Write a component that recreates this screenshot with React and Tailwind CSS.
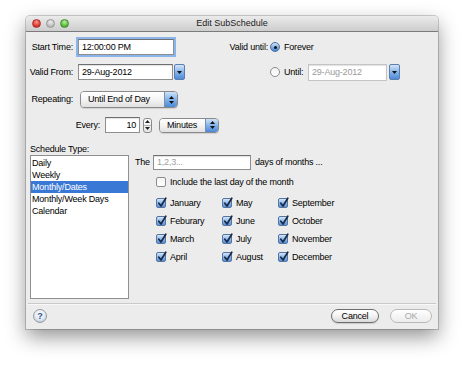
import React from "react";

function Field({ w, h = 16, children, focused, disabled, align = "left", placeholder }) {
  return (
    <div
      className={
        "flex items-center bg-white border " +
        (focused
          ? "shadow-[0_0_0_2px_#8ab4ea] "
          : "shadow-[inset_0_1px_1px_rgba(0,0,0,0.12)] ") +
        (disabled ? "border-[#c4c4c4] text-[#9a9a9a] " : "border-[#8f8f8f] border-t-[#6f6f6f] ") +
        (align === "right" ? "justify-end pr-[3px] " : "pl-[3px] ") +
        (placeholder ? "text-[#a0a0a0] " : "")
      }
      style={{ width: w, height: h }}
    >
      {children}
    </div>
  );
}

function DropBtn() {
  return (
    <div className="w-[11px] h-[16px] rounded-[2px] border border-[#5d7fae] bg-gradient-to-b from-[#d4e5f8] via-[#86b5ea] to-[#4f8ad8] flex items-center justify-center">
      <svg width="5" height="3" viewBox="0 0 5 3">
        <path d="M0 0 L5 0 L2.5 3 Z" fill="#111" />
      </svg>
    </div>
  );
}

function Arrows() {
  return (
    <div className="flex flex-col items-center gap-[2px]">
      <svg width="5" height="3" viewBox="0 0 5 3">
        <path d="M0 3 L5 3 L2.5 0 Z" fill="#111" />
      </svg>
      <svg width="5" height="3" viewBox="0 0 5 3">
        <path d="M0 0 L5 0 L2.5 3 Z" fill="#111" />
      </svg>
    </div>
  );
}

function Popup({ w, h, children }) {
  return (
    <div
      className="flex rounded-[4px] border border-[#8a8a8a] overflow-hidden shadow-[0_1px_1px_rgba(0,0,0,0.12)]"
      style={{ width: w, height: h }}
    >
      <div className="flex-1 flex items-center pl-[7px] bg-gradient-to-b from-white via-[#f4f4f4] to-[#e0e0e0]">
        {children}
      </div>
      <div className="w-[13px] border-l border-[#7a8fae] bg-gradient-to-b from-[#cfe2f7] via-[#82b3ea] to-[#4c88d6] flex items-center justify-center">
        <Arrows />
      </div>
    </div>
  );
}

function Stepper() {
  return (
    <div className="w-[9px] h-[15px] rounded-[3px] border border-[#8a8a8a] bg-gradient-to-b from-white to-[#e4e4e4] flex flex-col">
      <div className="flex-1 flex items-center justify-center border-b border-[#b0b0b0]">
        <svg width="5" height="3" viewBox="0 0 5 3">
          <path d="M0 3 L5 3 L2.5 0 Z" fill="#222" />
        </svg>
      </div>
      <div className="flex-1 flex items-center justify-center">
        <svg width="5" height="3" viewBox="0 0 5 3">
          <path d="M0 0 L5 0 L2.5 3 Z" fill="#222" />
        </svg>
      </div>
    </div>
  );
}

function Radio({ on }) {
  return on ? (
    <div className="w-[10px] h-[10px] rounded-full border border-[#4f6f9c] bg-gradient-to-b from-[#d3e4f8] via-[#82b2e8] to-[#4a86d4] flex items-center justify-center">
      <div className="w-[3px] h-[3px] rounded-full bg-[#111]" />
    </div>
  ) : (
    <div className="w-[10px] h-[10px] rounded-full border border-[#8c8c8c] bg-gradient-to-b from-[#f2f2f2] to-white" />
  );
}

function Check({ on }) {
  return on ? (
    <div className="relative w-[10px] h-[10px] rounded-[2px] border border-[#55749f] bg-gradient-to-b from-[#d6e6f8] via-[#8ab8ea] to-[#5990d9]">
      <svg className="absolute left-[0px] top-[-2px]" width="10" height="11" viewBox="0 0 10 11">
        <path d="M1.8 6.2 L4 9 L8.8 1.2" fill="none" stroke="#1b2a45" strokeWidth="1.7" strokeLinecap="round" strokeLinejoin="round" />
      </svg>
    </div>
  ) : (
    <div className="w-[10px] h-[10px] rounded-[2px] border border-[#8c8c8c] bg-gradient-to-b from-[#f3f3f3] to-white" />
  );
}

function Month({ name }) {
  return (
    <div className="h-[18px] flex items-center">
      <Check on />
      <span className="ml-[4px]">{name}</span>
    </div>
  );
}

export default function App() {
  const months = [
    "January", "May", "September",
    "Feburary", "June", "October",
    "March", "July", "November",
    "April", "August", "December",
  ];
  return (
    <div className="w-[465px] h-[366px] bg-white overflow-hidden pt-[16px] pl-[26px] font-['Liberation_Sans',Arial,sans-serif] text-[9px] tracking-[-0.2px] leading-none text-black">
      <div className="w-[412px] h-[313px] flex flex-col bg-[#ececec] rounded-t-[4px] shadow-[0_8px_20px_rgba(0,0,0,0.42),0_0_0_1px_rgba(0,0,0,0.18)]">
        {/* title bar */}
        <div className="h-[16px] shrink-0 grid grid-cols-[1fr_auto_1fr] items-center rounded-t-[4px] border-b border-[#7b7b7b] bg-gradient-to-b from-[#ebebeb] to-[#cdcdcd]">
          <div className="flex gap-[5px] pl-[6px]">
            <div className="w-[9px] h-[9px] rounded-full bg-[radial-gradient(circle_at_50%_30%,#ff9a8c,#e0382f_60%,#a8231d)] border border-[#a33]" />
            <div className="w-[9px] h-[9px] rounded-full bg-[radial-gradient(circle_at_50%_30%,#eeeeee,#c2c2c2_60%,#a0a0a0)] border border-[#999]" />
            <div className="w-[9px] h-[9px] rounded-full bg-[radial-gradient(circle_at_50%_30%,#b9f0a0,#5cbe3c_60%,#3a8a22)] border border-[#4a8a30]" />
          </div>
          <div className="text-[9px] tracking-normal text-[#222]">Edit SubSchedule</div>
          <div />
        </div>

        {/* body */}
        <div className="flex-1 flex flex-col">
          {/* row 1 */}
          <div className="mt-[7px] h-[16px] flex items-center">
            <span className="w-[47px] text-right">Start Time:</span>
            <div className="ml-[5px]">
              <Field w={96} focused>12:00:00 PM</Field>
            </div>
            <span className="ml-[46px] w-[48px] text-right">Valid until:</span>
            <div className="ml-[2px]"><Radio on /></div>
            <span className="ml-[4px]">Forever</span>
          </div>

          {/* row 2 */}
          <div className="mt-[9px] h-[16px] flex items-center">
            <span className="w-[47px] text-right">Valid From:</span>
            <div className="ml-[5px]">
              <Field w={95}>29-Aug-2012</Field>
            </div>
            <div className="ml-[1px]"><DropBtn /></div>
            <div className="ml-[85px]"><Radio /></div>
            <span className="ml-[4px] w-[24px]">Until:</span>
            <Field w={79} h={17} disabled>29-Aug-2012</Field>
            <div className="ml-[2px]"><DropBtn /></div>
          </div>

          {/* row 3 */}
          <div className="mt-[11px] h-[17px] flex items-center">
            <span className="w-[47px] text-right">Repeating:</span>
            <div className="ml-[7px]">
              <Popup w={98} h={17}>Until End of Day</Popup>
            </div>
          </div>

          {/* row 4 */}
          <div className="mt-[9px] h-[16px] flex items-center">
            <span className="w-[74px] text-right">Every:</span>
            <div className="ml-[5px]">
              <Field w={35} align="right">10</Field>
            </div>
            <div className="ml-[3px]"><Stepper /></div>
            <div className="ml-[7px]">
              <Popup w={60} h={15}>Minutes</Popup>
            </div>
          </div>

          <div className="mt-[11px] h-[11px] pl-[4px] flex items-center">Schedule Type:</div>

          {/* main */}
          <div className="h-[144px] flex">
            <div className="ml-[4px] w-[99px] h-[144px] bg-white border border-[#8f8f8f] pt-[1px]">
              {["Daily", "Weekly", "Monthly/Dates", "Monthly/Week Days", "Calendar"].map((t) => (
                <div
                  key={t}
                  className={
                    "h-[12px] flex items-center pl-[1px] " +
                    (t === "Monthly/Dates" ? "bg-[#3a78d6] text-white" : "")
                  }
                >
                  {t}
                </div>
              ))}
            </div>

            <div className="ml-[6px] flex flex-col">
              <div className="h-[15px] flex items-center">
                <span className="w-[18px]">The</span>
                <Field w={98} h={15} placeholder>1,2,3...</Field>
                <span className="ml-[4px]">days of months ...</span>
              </div>
              <div className="mt-[3px] h-[18px] flex items-center pl-[21px]">
                <Check />
                <span className="ml-[4px]">Include the last day of the month</span>
              </div>
              <div className="mt-[3px] pl-[21px] grid grid-cols-[66px_56px_auto]">
                {months.map((m) => (
                  <Month key={m} name={m} />
                ))}
              </div>
            </div>
          </div>

          {/* separator */}
          <div className="mt-[4px] mx-[2px] h-[2px] border-t border-[#c9c9c9] border-b border-b-[#f8f8f8]" />

          {/* bottom */}
          <div className="mt-[4px] h-[14px] flex items-center">
            <div className="ml-[7px] w-[14px] h-[14px] rounded-full border border-[#9a9a9a] bg-[radial-gradient(circle_at_50%_35%,#ffffff,#dfe8f3_55%,#9fb4cf)] flex items-center justify-center">
              <span className="text-[9px] font-bold text-[#2f4f86] leading-none tracking-normal">?</span>
            </div>
            <div className="ml-auto w-[48px] h-[14px] rounded-full border border-[#6d6d6d] bg-gradient-to-b from-white via-[#f2f2f2] to-[#dadada] flex items-center justify-center shadow-[0_1px_1px_rgba(0,0,0,0.15)]">
              Cancel
            </div>
            <div className="ml-[11px] mr-[6px] w-[42px] h-[14px] rounded-full border border-[#b9b9b9] bg-gradient-to-b from-white to-[#ececec] flex items-center justify-center text-[#a8a8a8]">
              OK
            </div>
          </div>
        </div>
      </div>
    </div>
  );
}
